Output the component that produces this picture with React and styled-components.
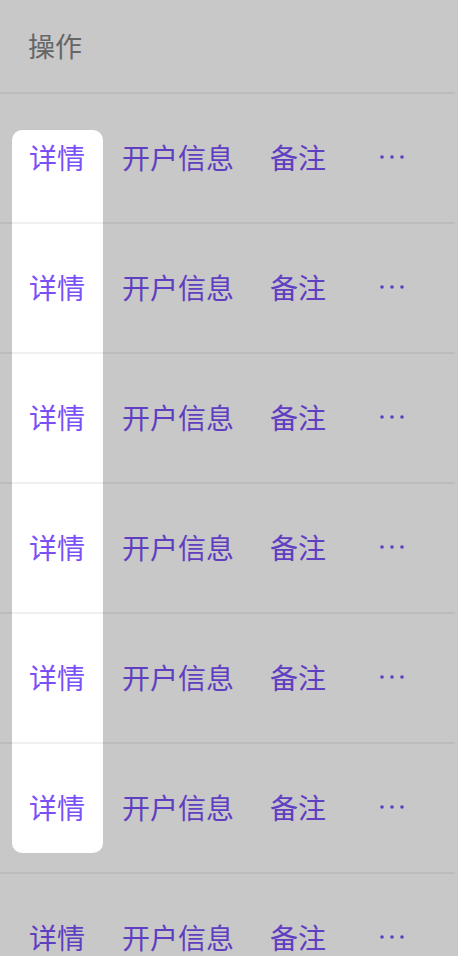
import React from "react";
import styled, { createGlobalStyle } from "styled-components";

const GlobalStyle = createGlobalStyle`
  html, body {
    margin: 0;
    padding: 0;
    background: #ffffff;
  }
  body {
    font-family: "Noto Sans CJK SC", "Noto Sans", sans-serif;
  }
`;

const Page = styled.div`
  position: relative;
  width: 458px;
  height: 956px;
  overflow: hidden;
  background: #ffffff;
`;

const Header = styled.div`
  height: 94px;
  box-sizing: border-box;
  padding: 0 0 2px 28px;
  display: flex;
  align-items: center;
  font-size: 27px;
  color: #828282;
  border-bottom: 2px solid #f0f0f0;
  margin-right: 3px;
`;

const Row = styled.div`
  height: 130px;
  box-sizing: border-box;
  padding: 0 0 3px 29px;
  display: flex;
  align-items: center;
  border-bottom: 2px solid #f0f0f0;
  margin-right: 3px;
`;

const Action = styled.span`
  font-size: 28px;
  line-height: 1;
  color: #7b4ff6;
  margin-right: ${p => p.$gap}px;
  white-space: nowrap;
`;

const More = styled.svg`
  display: block;
  width: 28px;
  height: 8px;
`;

// spotlight hole of the guide overlay
const Spotlight = styled.div`
  position: absolute;
  left: 12px;
  top: 130px;
  width: 91px;
  height: 723px;
  border-radius: 10px;
  box-shadow: 0 0 0 2000px rgba(0, 0, 0, 0.216);
  pointer-events: none;
`;

const rows = [1, 2, 3, 4, 5, 6, 7];

export default function App() {
  return (
    <Page>
      <GlobalStyle />
      <Header>操作</Header>
      {rows.map(r => (
        <Row key={r}>
          <Action $gap={37}>详情</Action>
          <Action $gap={36}>开户信息</Action>
          <Action $gap={52}>备注</Action>
          <More viewBox="0 0 28 8">
            <circle cx="4" cy="4" r="1.8" fill="#7b4ff6" />
            <circle cx="14" cy="4" r="1.8" fill="#7b4ff6" />
            <circle cx="24" cy="4" r="1.8" fill="#7b4ff6" />
          </More>
        </Row>
      ))}
      <Spotlight />
    </Page>
  );
}
